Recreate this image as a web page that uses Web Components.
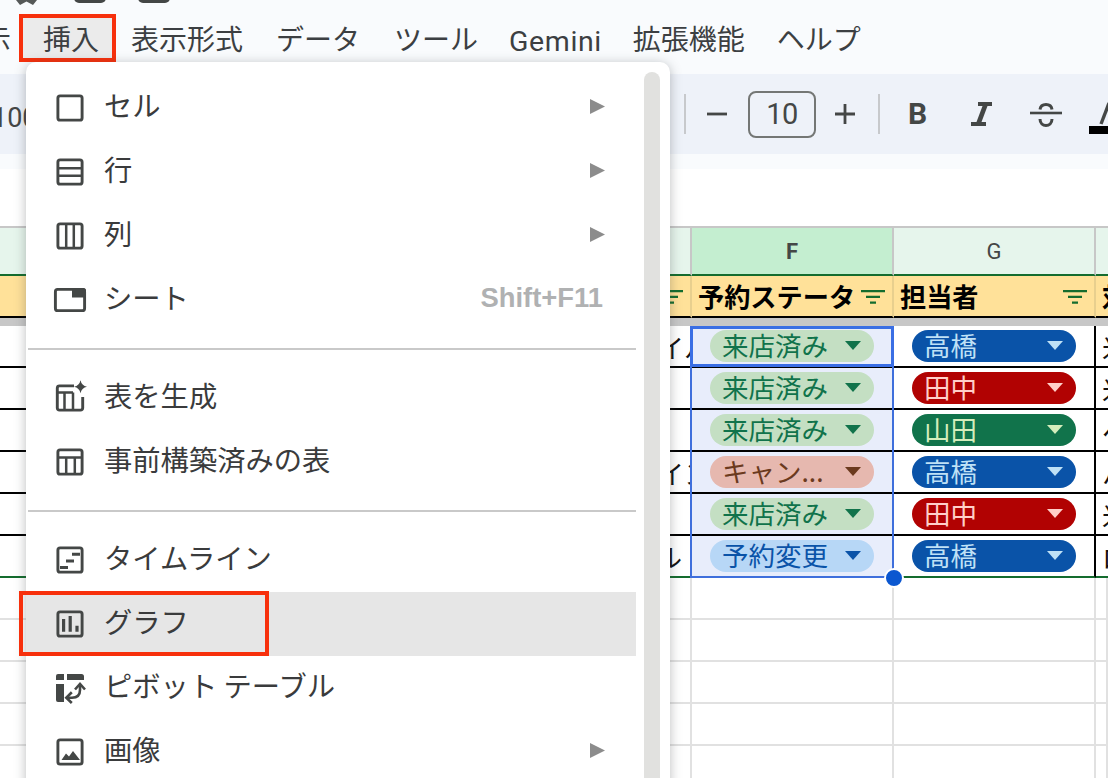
<!DOCTYPE html>
<html lang="ja"><head><meta charset="utf-8"><title>挿入メニュー</title>
<style>
html,body{margin:0;padding:0;background:#fff}
body{font-family:"Noto Sans CJK JP","Noto Sans",sans-serif;color:#3c4043}
</style></head><body>
<x-app>
  <x-titlebar></x-titlebar>
  <x-menubar>
    <x-bar-item style="margin-left:-61px">表示</x-bar-item>
    <x-bar-item boxed>挿入</x-bar-item>
    <x-bar-item>表示形式</x-bar-item>
    <x-bar-item style="margin-left:1px">データ</x-bar-item>
    <x-bar-item style="margin-left:2px">ツール</x-bar-item>
    <x-bar-item latin style="margin-left:-1px">Gemini</x-bar-item>
    <x-bar-item style="margin-left:-1px">拡張機能</x-bar-item>
    <x-bar-item>ヘルプ</x-bar-item>
  </x-menubar>
  <x-toolbar></x-toolbar>
  <x-formula></x-formula>
  <x-sheet></x-sheet>
  <x-menu>
    <x-menu-item icon="cell" arrow>セル</x-menu-item>
    <x-menu-item icon="row" arrow>行</x-menu-item>
    <x-menu-item icon="col" arrow>列</x-menu-item>
    <x-menu-item icon="sheet" shortcut="Shift+F11">シート</x-menu-item>
    <x-menu-sep></x-menu-sep>
    <x-menu-item icon="gen">表を生成</x-menu-item>
    <x-menu-item icon="table">事前構築済みの表</x-menu-item>
    <x-menu-sep></x-menu-sep>
    <x-menu-item icon="timeline">タイムライン</x-menu-item>
    <x-menu-item icon="chart" active>グラフ</x-menu-item>
    <x-menu-item icon="pivot">ピボット テーブル</x-menu-item>
    <x-menu-item icon="image" arrow>画像</x-menu-item>
  </x-menu>
</x-app>
<script>
function def(name, html, init){
  customElements.define(name, class extends HTMLElement{
    constructor(){super();this.attachShadow({mode:'open'}).innerHTML=html;}
    connectedCallback(){ if(init) init.call(this,this.shadowRoot); }
  });
}
const FRAME='<rect x="3.9" y="3.9" width="24.2" height="24.2" rx="2.2" fill="none" stroke="#444746" stroke-width="2.9"/>';
const L='fill="none" stroke="#444746" stroke-width="2.5"';
const ICONS={
  cell:FRAME,
  row:FRAME+`<path d="M4 12.2H28M4 19.8H28" ${L}/>`,
  col:FRAME+`<path d="M12.2 4V28M19.8 4V28" ${L}/>`,
  sheet:`<rect x="1.4" y="5.4" width="29.2" height="21.2" rx="2.2" fill="none" stroke="#444746" stroke-width="2.9"/><path d="M18 4H29.5A2.5 2.5 0 0 1 32 6.5V13.5H18Z" fill="#444746"/>`,
  gen:`<path d="M20 3.9H5.5A2.2 2.2 0 0 0 3.3 6V26A2.2 2.2 0 0 0 5.5 28.1H26.5A2.2 2.2 0 0 0 28.7 26V15" fill="none" stroke="#444746" stroke-width="2.9"/><path d="M3.5 10.5H19M10.5 10.5V28M19 10.5V28" ${L}/><path d="M26.5-1.8Q27.6 3.6 33 4.7Q27.6 5.9 26.5 11.2Q25.4 5.9 20 4.7Q25.4 3.6 26.5-1.8Z" fill="#444746"/>`,
  table:FRAME+`<path d="M4 11.5H28M12.2 11.5V28M20.8 11.5V28" ${L}/>`,
  timeline:FRAME+`<path d="M18 8.7H26V11.7H18ZM12 15.5H20V18.5H12ZM6 22H14V25H6Z" fill="#444746"/>`,
  chart:FRAME+`<path d="M8 11H11.2V23.7H8ZM14.6 8H17.8V23.7H14.6ZM21.4 17.7H24.6V23.7H21.4Z" fill="#444746"/>`,
  pivot:`<path d="M4 2H10V8H2V4A2 2 0 0 1 4 2ZM13 2H27.5A2.5 2.5 0 0 1 30 4.5V8H13ZM2 12H10V30H4A2 2 0 0 1 2 28Z" fill="#444746"/><path d="M26 14V18Q26 25.7 18 25.7H14" fill="none" stroke="#444746" stroke-width="2.6"/><path d="M21 17.5L26 12L31 17.5M17.8 20.3L12.3 25.7L17.8 31" fill="none" stroke="#444746" stroke-width="2.6"/>`,
  image:FRAME+`<path d="M7.5 24L12 17.5L15 20.5L19 15L26 24Z" fill="#444746"/>`
};

def('x-app',`<style>:host{display:flex;flex-direction:column;position:relative;width:1108px;height:778px;overflow:hidden;background:#f9fbfd}</style><slot></slot>`);

def('x-titlebar',`<style>:host{display:block;height:14px;flex:none;overflow:hidden}svg{display:block}</style>
<svg width="200" height="14"><path d="M16 0L20 5L26.5 1.5L33 5L37 0Z" fill="#565958"/><rect x="74" y="-10" width="32" height="13" rx="5" fill="#444746"/><rect x="138" y="-10" width="32" height="13" rx="5" fill="#444746"/></svg>`);

def('x-menubar',`<style>:host{display:flex;height:48px;flex:none;align-items:stretch;background:#f9fbfd;white-space:nowrap}</style><slot></slot>`);

def('x-bar-item',`<style>
:host{display:flex;align-items:center;flex:none;padding:0 16px;font-size:28px;line-height:48px;color:#3c3f42;position:relative;z-index:0}
:host([latin]){font-family:Roboto,sans-serif;font-size:28.5px;letter-spacing:.6px;padding:0 16px}
:host([boxed])::after{content:"";position:absolute;z-index:-1;left:-8px;right:-1px;top:0;bottom:0;background:#ebebeb;border:4px solid #f7300c}
span{display:block;margin-top:-1px}
:host([latin]) span{margin-top:7px}
</style><span><slot></slot></span>`);

def('x-toolbar',`<style>
:host{display:flex;align-items:center;height:80px;margin-top:12px;flex:none;background:#eef2f9;color:#444746;white-space:nowrap;overflow:hidden}
.zoom{font:27px Roboto,sans-serif;width:40px;margin-left:-8px;flex:none;margin-top:7px}
.sep{width:2px;height:40px;background:#c7c9cc;flex:none}
svg{display:block;flex:none}
.size{box-sizing:border-box;width:68px;height:47px;border:2px solid #747775;border-radius:8px;font:29px Roboto,sans-serif;display:flex;align-items:center;justify-content:center;flex:none;color:#444746;letter-spacing:-.5px}
.b{font:700 30px Roboto,sans-serif;color:#444746;flex:none;line-height:40px}
</style>
<span class="zoom">100%</span>
<span class="sep" style="margin-left:652px"></span>
<svg style="margin-left:21px" width="20" height="20" viewBox="0 0 20 20"><path d="M0 10H20" stroke="#444746" stroke-width="2.8"/></svg>
<span class="size" style="margin-left:21px">10</span>
<svg style="margin-left:19px" width="20" height="20" viewBox="0 0 20 20"><path d="M0 10H20M10 0V20" stroke="#444746" stroke-width="2.8"/></svg>
<span class="sep" style="margin-left:23px"></span>
<span class="b" style="margin-left:28px">B</span>
<svg style="margin-left:44px" width="21" height="24" viewBox="0 0 21 24"><path d="M7 0H21V4H16.5L10.5 20H15V24H0V20H5.5L11.5 4H7Z" fill="#444746"/></svg>
<svg style="margin-left:38px;margin-top:1px" width="32" height="24" viewBox="0 0 32 24"><path d="M0 10H32" stroke="#444746" stroke-width="2.6"/><path d="M10 6.5C10.5 3 13 1.5 16 1.5S21.5 3 22 6.5M10 16C10 20.5 13 22.5 16 22.5S22 20.5 22 16" fill="none" stroke="#444746" stroke-width="3"/></svg>
<svg style="margin-left:27px;margin-top:8px" width="20" height="36" viewBox="0 0 20 36"><path d="M12 24L20 3" stroke="#444746" stroke-width="3.4" fill="none"/><rect x="0" y="26" width="20" height="8" fill="#000"/></svg>`);

def('x-formula',`<style>:host{display:block;flex:none;height:57px;margin-top:15px;background:#fff}</style>`);

def('x-chip',`<style>
:host{display:flex;align-items:center;box-sizing:border-box;width:164px;height:32px;border-radius:16px;padding:0 13px 0 12px;font-size:26.5px;line-height:32px;white-space:nowrap;background:var(--bg);color:var(--fg);margin-top:-1px}
.t{flex:1;overflow:hidden;margin-top:-2px}
svg{display:block;flex:none}
</style><span class="t"><slot></slot></span><svg width="16" height="9" viewBox="0 0 16 9"><path d="M0 0H16L8 9Z" fill="currentColor"/></svg>`);

const FILTER='<svg class="f" width="24" height="14" viewBox="0 0 24 14"><path d="M0 0H24V2.2H0ZM5 5.8H19V8H5ZM9 11.6H15V13.8H9Z" fill="#146c2e"/></svg>';
const TONES={
  green:['#c4dfc3','#11734b'],red:['#e6b8af','#6b3a1e'],blue:['#b7d7f6','#0a53a8'],
  t:['#0a53a8','#bfe1f6'],ta:['#b10202','#ffcfc9'],y:['#11734b','#d4edbc']};
const ROWS=[
 ['イル','来店済み','green','高橋','t','米',658],
 ['','来店済み','green','田中','ta','米',658],
 ['','来店済み','green','山田','y','ヘ',658],
 ['イン','キャン...','red','高橋','t','ハ',658],
 ['','来店済み','green','田中','ta','米',658],
 ['ル','予約変更','blue','高橋','t','ロ',656]];

def('x-sheet',`<style>
:host{display:block;flex:1;position:relative;overflow:hidden;background:#fff;border-top:2px solid #c7c7c7;font-size:26px;color:#111}
.g{display:grid;grid-template-columns:692px 202px 202px 12px}
.g>div{box-sizing:border-box;white-space:nowrap;overflow:hidden;display:flex;align-items:center;position:relative;min-width:0}
.ch{background:#e6f5ec;border-right:2px solid #c7c7c7;border-bottom:2px solid #146c2e;justify-content:center;font:22px Roboto,sans-serif;color:#444746}
.ch.sel{background:#c4eed0;font-weight:700}
.hd{background:#ffe199;border-right:2px solid #e8cf8e;border-bottom:2px solid #000;font-weight:700;font-size:26.2px;color:#000;padding-left:6px;justify-content:flex-start}
.hd .f{position:absolute;right:7px;top:14px}
.fz{grid-column:1/-1;background:#c7c7c7}
.c{background:#fff;border-bottom:2px solid #000}
.c.f{background:#e8edfb;padding-left:18px}
.c.gg{padding-left:18px;border-right:2px solid #000}
.c.h{padding-left:6px}
.last{border-bottom-color:#146c2e!important}
.nil{border-right:2px solid #e1e1e1;border-bottom:2px solid #e1e1e1}
.range{position:absolute;left:690px;top:98px;width:204px;height:252px;box-sizing:border-box;border:2px solid #3f6fdc;pointer-events:none}
.active{position:absolute;left:690px;top:98px;width:204px;height:41px;box-sizing:border-box;border:3px solid #3a6ee4;pointer-events:none}
.handle{position:absolute;left:884px;top:340px;width:16px;height:16px;border-radius:50%;background:#0b57d0;border:2px solid #fff}
</style><div class="g" id="g"></div><div class="range"></div><div class="active"></div><div class="handle"></div>`,function(r){
  const g=r.getElementById('g');
  let h=`<div class="ch"></div><div class="ch sel">F</div><div class="ch">G</div><div class="ch" style="border-right:0"></div>`;
  h+=`<div class="hd">${FILTER}</div><div class="hd">予約ステータ${FILTER}</div><div class="hd">担当者${FILTER}</div><div class="hd" style="border-right:0">対</div>`;
  h+=`<div class="fz"></div>`;
  ROWS.forEach((x,i)=>{
    const l=i==5?' last':'';
    const chip=(t,k)=>`<x-chip style="--bg:${TONES[k][0]};--fg:${TONES[k][1]}">${t}</x-chip>`;
    h+=`<div class="c e${l}" style="padding-left:${x[6]}px">${x[0]}</div><div class="c f${l}">${chip(x[1],x[2])}</div><div class="c gg${l}">${chip(x[3],x[4])}</div><div class="c h${l}">${x[5]}</div>`;
  });
  for(let i=0;i<5;i++) h+=`<div class="nil"></div><div class="nil"></div><div class="nil"></div><div class="nil"></div>`;
  g.innerHTML=h;
  g.style.gridTemplateRows='48px 42px 8px repeat(11,42px)';
});

def('x-menu',`<style>
:host{position:absolute;left:26px;top:62px;width:644px;height:760px;box-sizing:border-box;background:#fff;border-radius:10px;box-shadow:0 2px 12px rgba(60,64,67,.35);display:flex;padding-top:14px}
.list{width:610px;flex:none;display:flex;flex-direction:column}
.bar{width:16px;margin:-4px 0 0 8px;background:#e1e1df;border-radius:8px;flex:none}
</style><div class="list"><slot></slot></div><div class="bar"></div>`);

def('x-menu-sep',`<style>:host{display:block;flex:none;height:2px;margin:16px 0 16px 2px;background:#c9c9c9}</style>`);

def('x-menu-item',`<style>
:host{display:flex;align-items:center;flex:none;height:64px;padding:0 31px 0 28px;position:relative;font-size:28.3px;color:#3a3b3c;white-space:nowrap}
:host([active]){background:#e6e6e6}
:host([active])::after{content:"";position:absolute;left:-7px;top:-1px;width:250px;height:65px;box-sizing:border-box;border:4px solid #f7300c;pointer-events:none}
svg.i{display:block;flex:none;width:32px;height:32px;overflow:visible;margin-right:18px}
.t{flex:1;margin-top:-7px}
.k{font:700 27.4px "Liberation Sans",Arial,sans-serif;color:#b0b1b2;margin:-4px 2px 0 0}
.a{display:none;flex:none;margin-top:-4px}
</style><svg class="i" viewBox="0 0 32 32"></svg><span class="t"><slot></slot></span><span class="k"></span><svg class="a" width="15" height="15" viewBox="0 0 15 15"><path d="M0 0L15 7.5L0 15Z" fill="#8c8c8c"/></svg>`,function(r){
  r.querySelector('svg.i').innerHTML=ICONS[this.getAttribute('icon')]||'';
  r.querySelector('.k').textContent=this.getAttribute('shortcut')||'';
  if(this.hasAttribute('arrow')) r.querySelector('.a').style.display='block';
});
</script>
</body></html>
